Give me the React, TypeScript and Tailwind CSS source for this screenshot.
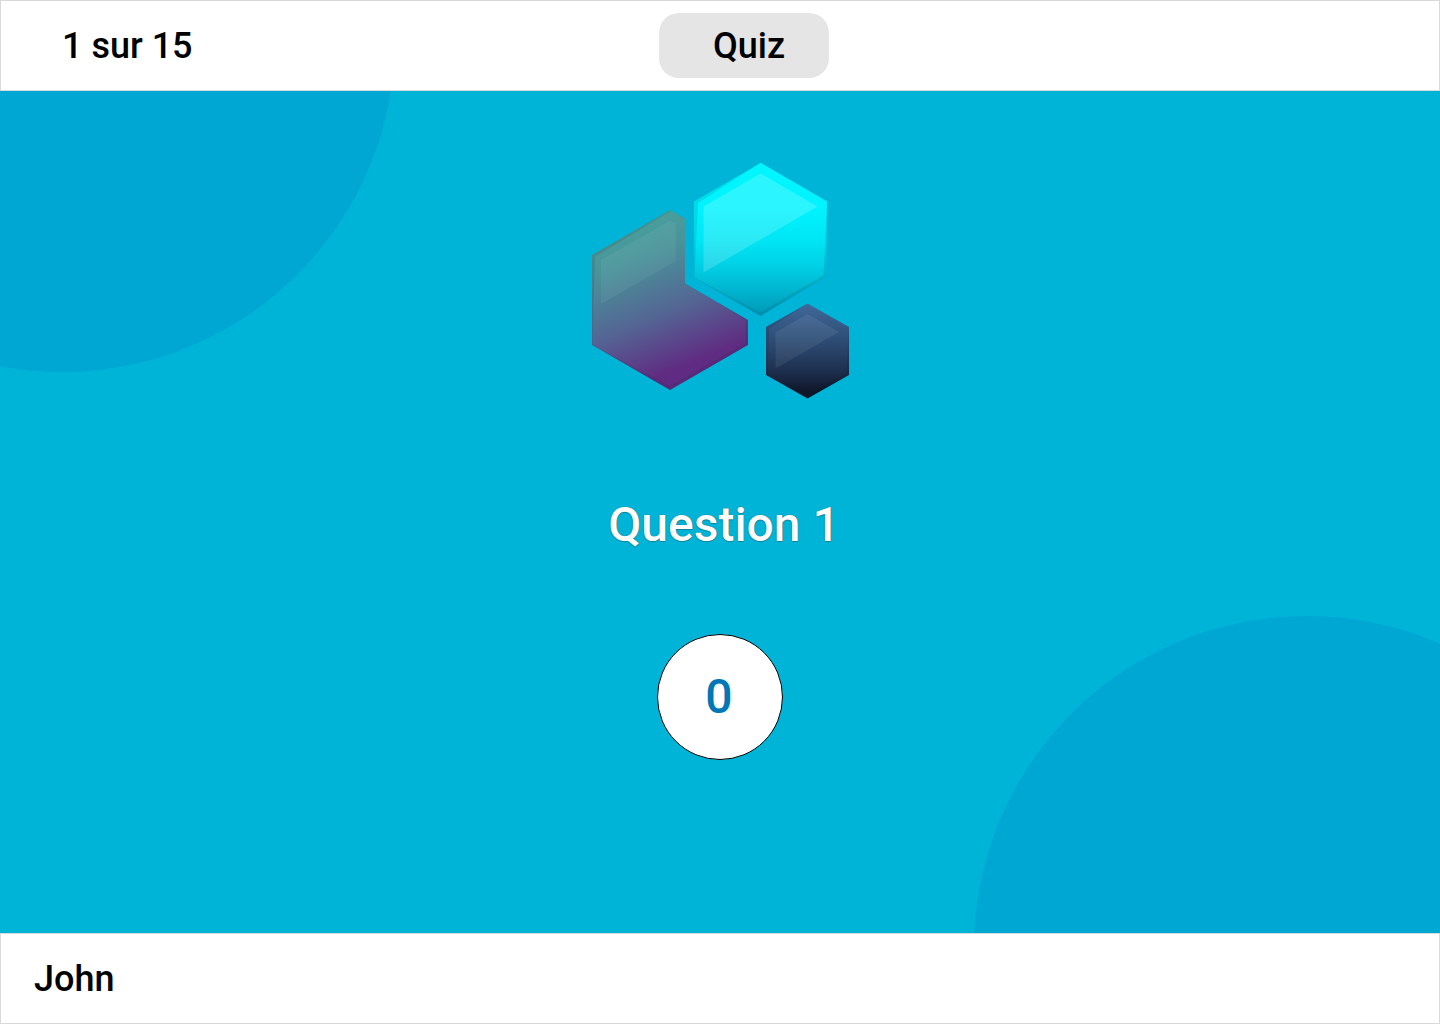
function HexLogo() {
  return (
    <svg
      width="258"
      height="236"
      viewBox="591 163 258 236"
      role="img"
      aria-label="Logo"
      className="shrink-0"
    >
      <defs>
        <linearGradient id="violet" gradientUnits="userSpaceOnUse" x1="642" y1="220" x2="702" y2="366">
          <stop offset="0" stopColor="#48a09c" />
          <stop offset="0.22" stopColor="#499399" />
          <stop offset="0.6" stopColor="#546594" />
          <stop offset="0.96" stopColor="#602b82" />
        </linearGradient>
        <linearGradient id="violetEdge" gradientUnits="userSpaceOnUse" x1="642" y1="220" x2="702" y2="366">
          <stop offset="0" stopColor="#45928d" />
          <stop offset="0.6" stopColor="#505e8a" />
          <stop offset="0.96" stopColor="#562a78" />
        </linearGradient>
        <linearGradient id="cyan" gradientUnits="userSpaceOnUse" x1="0" y1="163" x2="0" y2="316">
          <stop offset="0" stopColor="#00f6ff" />
          <stop offset="0.3" stopColor="#00f3ff" />
          <stop offset="0.5" stopColor="#00e6f4" />
          <stop offset="0.66" stopColor="#00d2e6" />
          <stop offset="1" stopColor="#0098b8" />
        </linearGradient>
        <linearGradient id="cyanEdge" gradientUnits="userSpaceOnUse" x1="0" y1="163" x2="0" y2="316">
          <stop offset="0" stopColor="#00e4ec" />
          <stop offset="0.5" stopColor="#00d4e4" />
          <stop offset="0.75" stopColor="#00b0c8" />
          <stop offset="1" stopColor="#008cac" />
        </linearGradient>
        <linearGradient id="navy" gradientUnits="userSpaceOnUse" x1="0" y1="303" x2="0" y2="399">
          <stop offset="0" stopColor="#40699b" />
          <stop offset="0.35" stopColor="#2f5079" />
          <stop offset="0.7" stopColor="#1e3050" />
          <stop offset="0.92" stopColor="#0f172a" />
        </linearGradient>
      </defs>

      <path d="M670 210 L685 218.500 V283.500 L748 320 V345 L670 390 L592 345 V255 Z" fill="url(#violetEdge)" />
      <path d="M671 211 L685 219 V284 L745.500 320 V343 L670 386 L592.500 345 L595 257 Z" fill="url(#violet)" />
      <path d="M670.500 220.500 L675.800 223.500 V261 L601 304 V260 Z" fill="#ffffff" fillOpacity="0.055" />

      <path d="M760.500 163 L827 201.500 L826 277 L760.500 316 L694 278 V201.500 Z" fill="url(#cyanEdge)" />
      <path d="M760.500 163 L827 201.500 L823.500 275.500 L760.500 312.500 L694.500 277.500 L698 203 Z" fill="url(#cyan)" />
      <path d="M760.500 173.500 L817.500 206.500 L703.500 272.500 V206.500 Z" fill="#ffffff" fillOpacity="0.17" />

      <path d="M807.500 303.500 L849 327 V375 L807.500 398.500 L766 375 V327 Z" fill="url(#navy)" />
      <path d="M807.500 303.500 L766 327 V375 L767.500 375 L769.500 328.500 Z" fill="#000000" fillOpacity="0.09" />
      <path d="M849 327 V375 L807.500 398.500 L807.500 396 L846.500 373.500 Z" fill="#000000" fillOpacity="0.09" />
      <path d="M807.500 314 L839 332 L775.500 368.500 V332.500 Z" fill="#ffffff" fillOpacity="0.07" />
    </svg>
  );
}

export default function App() {
  return (
    <div className="flex min-h-screen flex-col bg-[#00b4d8] font-['Roboto',sans-serif] text-4xl font-medium text-black">
      <header className="grid grid-cols-[1fr_auto_1fr] items-center border border-[#d9d9d9] bg-white py-3 pl-12">
        <p className="pl-[13px]">1 sur 15</p>
        <h1 className="flex h-[65px] w-[170px] items-center justify-center rounded-[20px] bg-[#e5e5e5] pl-2.5">
          Quiz
        </h1>
      </header>

      <main className="relative flex flex-1 flex-col items-center overflow-hidden pt-[72px] pb-16">
        <div className="absolute -top-[385px] -left-[271px] size-[666px] rounded-full bg-[#00a7d3]" />
        <div className="absolute -right-[200px] -bottom-[349px] size-[666px] rounded-full bg-[#00a7d3]" />
        <div className="relative flex flex-col items-center">
          <HexLogo />
          <h2 className="mt-[97px] pl-2 text-5xl leading-[58px] text-white [text-shadow:0_0_1px_rgba(0,0,0,0.6),0_1px_1px_rgba(0,0,0,0.2)]">
            Question 1
          </h2>
          <div
            role="timer"
            className="mt-20 flex size-[126px] items-center justify-center rounded-full border border-black bg-white pr-0.5 text-5xl text-[#0077b6]"
          >
            0
          </div>
        </div>
      </main>

      <footer className="flex h-[91px] items-center border border-[#d9d9d9] bg-white px-[33px]">
        <p>John</p>
      </footer>
    </div>
  );
}
